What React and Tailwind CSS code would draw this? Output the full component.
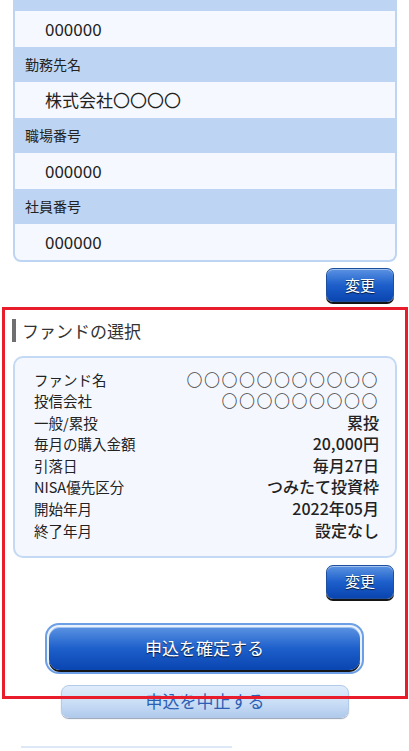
const font = { fontFamily: '"Noto Sans CJK JP", "Noto Sans", sans-serif' };

function ChangeButton() {
  return (
    <div className="flex justify-end pr-[15px]">
      <button className="w-[68px] h-[34px] rounded-[7px] border border-[#1e4f9e] bg-[linear-gradient(to_bottom,#5b93e2,#1d5fcb_50%,#0a45b0)] shadow-[0_2px_0_#151515,inset_0_1px_0_rgba(255,255,255,0.45)] text-white text-[15px] [text-shadow:0_1px_1px_rgba(0,0,0,0.7)]">
        変更
      </button>
    </div>
  );
}

const workRows = [
  { label: '勤務先名', value: '株式会社〇〇〇〇' },
  { label: '職場番号', value: '000000' },
  { label: '社員番号', value: '000000' },
];

const fundRows = [
  { label: 'ファンド名', value: '〇〇〇〇〇〇〇〇〇〇〇', circles: true },
  { label: '投信会社', value: '〇〇〇〇〇〇〇〇〇', circles: true },
  { label: '一般/累投', value: '累投' },
  { label: '毎月の購入金額', value: '20,000円' },
  { label: '引落日', value: '毎月27日' },
  { label: 'NISA優先区分', value: 'つみたて投資枠' },
  { label: '開始年月', value: '2022年05月' },
  { label: '終了年月', value: '設定なし' },
];

export default function App() {
  return (
    <div className="relative w-[409px] h-[751px] overflow-hidden bg-white text-[#222]" style={font}>
      {/* work place card */}
      <div className="ml-[13px] w-[384px] bg-[#bdd5f3] border-x-2 border-b-2 border-[#bdd5f3] rounded-b-[8px] overflow-hidden">
        <div className="h-[11px]" />
        <div className="h-[36px] bg-[#f5f8fe] flex items-center pl-[30px] text-[17px]">000000</div>
        {workRows.map(row => (
          <div key={row.label}>
            <div className="h-[35px] flex items-center pl-[10px] text-[14px]">{row.label}</div>
            <div className="h-[36px] bg-[#f5f8fe] flex items-center pl-[30px] text-[17px]">{row.value}</div>
          </div>
        ))}
      </div>

      <div className="mt-[6px]">
        <ChangeButton />
      </div>

      {/* fund selection */}
      <div className="mt-[16px] ml-[12px] flex items-center gap-[6px]">
        <div className="w-[4px] h-[23px] bg-[#6f6f6f]" />
        <h2 className="text-[17px] text-[#333]">ファンドの選択</h2>
      </div>

      <div className="mt-[12px] ml-[13px] w-[384px] h-[202px] rounded-[10px] border-2 border-[#c4d9f4] bg-[#f4f7fe] pt-[11px] pl-[19px] pr-[16px]">
        {fundRows.map(row => (
          <div key={row.label} className="h-[21.6px] leading-[21.6px] flex items-center justify-between">
            <span className="text-[14.5px]">{row.label}</span>
            {row.circles ? (
              <span className="text-[16px] font-light tracking-[1.5px] text-[#444]">{row.value}</span>
            ) : (
              <span className="text-[16px] font-medium">{row.value}</span>
            )}
          </div>
        ))}
      </div>

      <div className="mt-[7px]">
        <ChangeButton />
      </div>

      {/* confirm */}
      <div className="mt-[24px] ml-[45px] w-[319px] h-[51px] rounded-[14px] border-2 border-[#6d9fe6] bg-[#e9f1fc] p-[2px]">
        <button className="w-full h-full rounded-[11px] bg-[linear-gradient(to_bottom,#5b93e2,#1d5fcb_50%,#0a45b0)] shadow-[0_2px_0_#151515,inset_0_1px_0_rgba(255,255,255,0.45)] text-white text-[17px] [text-shadow:0_1px_1px_rgba(0,0,0,0.7)]">
          申込を確定する
        </button>
      </div>

      {/* cancel */}
      <div className="mt-[11px] ml-[61px] w-[288px]">
        <button className="w-full h-[33px] rounded-[8px] border border-[#b3cbea] bg-[linear-gradient(to_bottom,#e0ecfb,#c6dbf5_60%,#b0caec)] shadow-[0_1px_1px_rgba(80,100,130,0.6)] text-[#2c5fb4] text-[17px]">
          申込を中止する
        </button>
      </div>

      <div className="mt-[28px] ml-[21px] w-[211px] h-[2px] bg-[#dde8f7]" />

      {/* annotation frame */}
      <div className="absolute left-[2px] top-[307px] w-[406px] h-[392px] border-[3px] border-[#e81c2b] pointer-events-none" />
    </div>
  );
}
